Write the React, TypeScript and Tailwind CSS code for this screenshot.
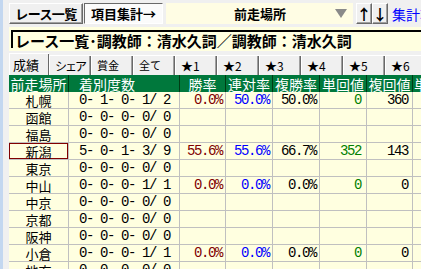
const rows = [
  { place: '札幌', rec: '0- 1- 0- 1/ 2', win: '0.0%', ren: '50.0%', fuku: '50.0%', tan: '0', fk: '360' },
  { place: '函館', rec: '0- 0- 0- 0/ 0' },
  { place: '福島', rec: '0- 0- 0- 0/ 0' },
  { place: '新潟', rec: '5- 0- 1- 3/ 9', win: '55.6%', ren: '55.6%', fuku: '66.7%', tan: '352', fk: '143', selected: true },
  { place: '東京', rec: '0- 0- 0- 0/ 0' },
  { place: '中山', rec: '0- 0- 0- 1/ 1', win: '0.0%', ren: '0.0%', fuku: '0.0%', tan: '0', fk: '0' },
  { place: '中京', rec: '0- 0- 0- 0/ 0' },
  { place: '京都', rec: '0- 0- 0- 0/ 0' },
  { place: '阪神', rec: '0- 0- 0- 0/ 0' },
  { place: '小倉', rec: '0- 0- 0- 1/ 1', win: '0.0%', ren: '0.0%', fuku: '0.0%', tan: '0', fk: '0' },
  { place: '地方', rec: '0- 0- 0- 0/ 0' },
];

const tabs = ['成績', 'シェア', '賞金', '全て', '★1', '★2', '★3', '★4', '★5', '★6'];

const cols = ['w-[60px]', 'w-[111px]', 'w-[46px]', 'w-[47px]', 'w-[47px]', 'w-[47px]', 'w-[46px]', 'w-[40px]'];

const mono = "font-['Liberation_Mono','Noto_Sans_CJK_JP',monospace] text-[14px] tracking-[-1.4px]";

const raised = 'border border-t-white border-l-white border-r-[#696969] border-b-[#696969] shadow-[inset_-1px_-1px_0_#a0a0a0]';

export default function App() {
  return (
    <div className="flex h-[269px] w-[421px] overflow-hidden bg-[#f0f0f0] font-['Noto_Sans_CJK_JP',sans-serif] text-black">
      <div className="w-[3px] shrink-0 bg-[#c3d7f0]" />
      <div className="min-w-0 flex-1 overflow-hidden pl-[6px]">
        {/* toolbar */}
        <div className="mt-[3px] flex h-[21px] items-stretch whitespace-nowrap">
          <div className={`${raised} flex w-[74px] shrink-0 items-center justify-center bg-[#f0f0f0] text-[13px] font-bold leading-none tracking-[-0.6px]`}>
            レース一覧
          </div>
          <div className="ml-[1px] flex w-[79px] shrink-0 items-center justify-center border border-t-[#696969] border-l-[#696969] border-r-white border-b-white bg-[#fbfbfb] text-[13px] font-bold leading-none">
            項目集計→
          </div>
          <div className="ml-[3px] flex w-[187px] shrink-0 items-center bg-[#fffde4] pl-[68px] pr-[6px] text-[13px] font-bold leading-none">
            <span className="flex-1">前走場所</span>
            <svg width="12" height="9" viewBox="0 0 12 9">
              <path d="M0 0 H12 L6 9 Z" fill="#8a8a8a" />
            </svg>
          </div>
          <div className={`${raised} ml-[3px] flex w-[16px] shrink-0 items-center justify-center text-[15px] font-bold leading-none`}>
            ↑
          </div>
          <div className={`${raised} flex w-[16px] shrink-0 items-center justify-center text-[15px] font-bold leading-none`}>
            ↓
          </div>
          <div className="ml-[4px] flex shrink-0 items-center text-[14px] leading-none text-[#0000ff]">集計項目</div>
        </div>

        {/* title */}
        <div className="mt-[3px] h-[24px] bg-[#ffffe0] pl-[2px] pt-[3px]">
          <div className="flex h-[18px] items-center whitespace-nowrap border-l-2 border-t-2 border-black pl-[2px] text-[15px] font-bold leading-none">
            レース一覧･調教師：清水久詞／調教師：清水久詞
          </div>
        </div>

        {/* tabs */}
        <div className="mt-[2px] flex h-[22px] items-end whitespace-nowrap">
          {tabs.map((t, i) => (
            <div
              key={t}
              className={
                i === 0
                  ? 'flex h-[22px] w-[40px] shrink-0 items-center border-l border-t border-white pl-[3px] text-[13px] leading-none shadow-[inset_-1px_0_0_#696969]'
                  : `flex h-[20px] w-[42px] shrink-0 items-center border-l border-t border-white pl-[5px] leading-none shadow-[inset_-1px_0_0_#696969,inset_-2px_0_0_#a0a0a0] ${i === 1 ? 'text-[12px] tracking-[-2px]' : i < 4 ? 'text-[11px]' : 'text-[12px]'}`
              }
            >
              {t}
            </div>
          ))}
        </div>

        {/* grid */}
        <div className="flex h-[17px] bg-[#00783c] text-[14px] leading-none text-white whitespace-nowrap">
          {['前走場所', '着別度数', '勝率', '連対率', '複勝率', '単回値', '複回値', '単'].map((h, i) => (
            <div
              key={h}
              className={`${cols[i]} flex shrink-0 items-center overflow-hidden border-r border-[#003c14] ${i === 1 ? 'pl-[10px]' : i === 7 ? 'pl-[1px]' : 'justify-center'}`}
            >
              {h}
            </div>
          ))}
        </div>
        {rows.map((r) => (
          <div key={r.place} className="flex h-[17px] bg-[#ffffe0] leading-none whitespace-nowrap">
            <div
              className={`${cols[0]} flex shrink-0 items-center justify-center border-r border-b border-[#c0c0c0] text-[13px] ${r.selected ? 'ring-1 ring-inset ring-[#800000]' : ''}`}
            >
              {r.place}
            </div>
            <div className={`${cols[1]} ${mono} flex shrink-0 items-center whitespace-pre border-r border-b border-[#c0c0c0] pl-[10px]`}>
              {r.rec}
            </div>
            <div className={`${cols[2]} ${mono} flex shrink-0 items-center justify-end border-r border-b border-[#c0c0c0] pr-[3px] text-[#800000]`}>
              {r.win}
            </div>
            <div className={`${cols[3]} ${mono} flex shrink-0 items-center justify-end border-r border-b border-[#c0c0c0] pr-[3px] text-[#0000ff]`}>
              {r.ren}
            </div>
            <div className={`${cols[4]} ${mono} flex shrink-0 items-center justify-end border-r border-b border-[#c0c0c0] pr-[3px]`}>
              {r.fuku}
            </div>
            <div className={`${cols[5]} ${mono} flex shrink-0 items-center justify-end border-r border-b border-[#c0c0c0] pr-[5px] text-[#008000]`}>
              {r.tan}
            </div>
            <div className={`${cols[6]} ${mono} flex shrink-0 items-center justify-end border-r border-b border-[#c0c0c0] pr-[4px]`}>
              {r.fk}
            </div>
            <div className={`${cols[7]} shrink-0 border-b border-[#c0c0c0]`} />
          </div>
        ))}
      </div>
    </div>
  );
}
